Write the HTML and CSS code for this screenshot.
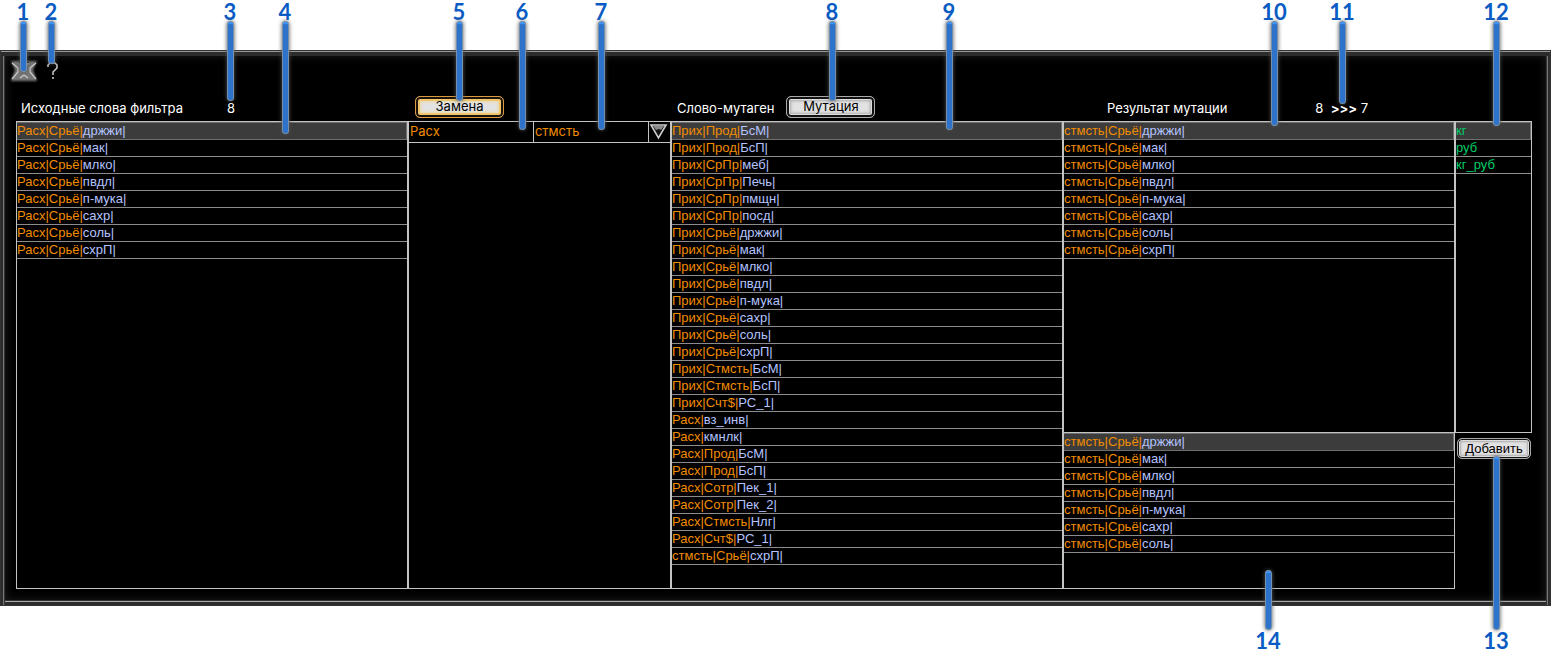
FILE: index.html
```
<!DOCTYPE html>
<html lang="ru">
<head>
<meta charset="utf-8">
<title>Мутация слов</title>
<link rel="stylesheet" href="styles.css">
</head>
<body>
<main class="window">
  <div class="toolbar">
    <button class="tool" aria-label="Закрыть">
      <svg width="30" height="24" viewBox="0 0 30 24">
        <defs><filter id="glow" x="-20%" y="-20%" width="140%" height="140%"><feGaussianBlur stdDeviation="1.2"/></filter></defs>
        <path d="M2 2h26l-4 9 4 11H2l4-11z" fill="#777" filter="url(#glow)"/>
        <path d="M10 3h10l-5 7z" fill="#111"/>
        <path d="M4 4h7l4 6 4-6h7l-5 7 5 9h-7l-4-3-4 3H4l5-9z" fill="#777"/>
        <path d="M3 4l6 5v4l-6 7M27 4l-6 5v4l6 7M11 19l4-3 4 3M11 4l4 6 4-6" fill="none" stroke="#ccc" stroke-width="1.2"/>
      </svg>
    </button>
    <button class="tool help" aria-label="Справка">
      <svg width="12" height="20" viewBox="0 0 12 20">
        <path d="M1 6V4l2-2h5l2 2v3L6 11v3M6 16v2" fill="none" stroke="#ccc" stroke-width="1.5"/>
      </svg>
    </button>
  </div>

  <div class="grid heads">
    <div class="head source-head"><h2>Исходные слова фильтра</h2><output>8</output></div>
    <div class="head replace-head"><button class="btn gold">Замена</button></div>
    <div class="head mutagen-head"><h2>Слово-мутаген</h2><button class="btn">Мутация</button></div>
    <div class="head result-head"><h2>Результат мутации</h2><output>8 &nbsp;<b>&gt;&gt;&gt;</b> 7</output></div>
  </div>

  <div class="grid body">
    <ul class="panel list">
      <li class="on">Расх|Срьё|<span>држжи|</span></li>
      <li>Расх|Срьё|<span>мак|</span></li>
      <li>Расх|Срьё|<span>млко|</span></li>
      <li>Расх|Срьё|<span>пвдл|</span></li>
      <li>Расх|Срьё|<span>п-мука|</span></li>
      <li>Расх|Срьё|<span>сахр|</span></li>
      <li>Расх|Срьё|<span>соль|</span></li>
      <li>Расх|Срьё|<span>схрП|</span></li>
    </ul>
    <section class="panel">
      <div class="replace">
        <input class="from" aria-label="Что заменить" value="Расх">
        <input class="to" aria-label="На что заменить" value="стмсть">
        <button class="drop" aria-label="Открыть список">
          <svg width="20" height="20" viewBox="0 0 20 20"><path d="M2 3h15L9.500 16z" fill="#111" stroke="#ccc" stroke-width="1.6"/><path d="M4 4h11l-3 4-2-1-3 1z" fill="#888"/></svg>
        </button>
      </div>
    </section>
    <ul class="panel list">
      <li class="on">Прих|Прод|<span>БсМ|</span></li>
      <li>Прих|Прод|<span>БсП|</span></li>
      <li>Прих|СрПр|<span>меб|</span></li>
      <li>Прих|СрПр|<span>Печь|</span></li>
      <li>Прих|СрПр|<span>пмщн|</span></li>
      <li>Прих|СрПр|<span>посд|</span></li>
      <li>Прих|Срьё|<span>држжи|</span></li>
      <li>Прих|Срьё|<span>мак|</span></li>
      <li>Прих|Срьё|<span>млко|</span></li>
      <li>Прих|Срьё|<span>пвдл|</span></li>
      <li>Прих|Срьё|<span>п-мука|</span></li>
      <li>Прих|Срьё|<span>сахр|</span></li>
      <li>Прих|Срьё|<span>соль|</span></li>
      <li>Прих|Срьё|<span>схрП|</span></li>
      <li>Прих|Стмсть|<span>БсМ|</span></li>
      <li>Прих|Стмсть|<span>БсП|</span></li>
      <li>Прих|Счт$|<span>РС_1|</span></li>
      <li>Расх|<span>вз_инв|</span></li>
      <li>Расх|<span>кмнлк|</span></li>
      <li>Расх|Прод|<span>БсМ|</span></li>
      <li>Расх|Прод|<span>БсП|</span></li>
      <li>Расх|Сотр|<span>Пек_1|</span></li>
      <li>Расх|Сотр|<span>Пек_2|</span></li>
      <li>Расх|Стмсть|<span>Нлг|</span></li>
      <li>Расх|Счт$|<span>РС_1|</span></li>
      <li>стмсть|Срьё|<span>схрП|</span></li>
    </ul>
    <div class="stack">
      <ul class="panel list upper">
        <li class="on">стмсть|Срьё|<span>држжи|</span></li>
        <li>стмсть|Срьё|<span>мак|</span></li>
        <li>стмсть|Срьё|<span>млко|</span></li>
        <li>стмсть|Срьё|<span>пвдл|</span></li>
        <li>стмсть|Срьё|<span>п-мука|</span></li>
        <li>стмсть|Срьё|<span>сахр|</span></li>
        <li>стмсть|Срьё|<span>соль|</span></li>
        <li>стмсть|Срьё|<span>схрП|</span></li>
      </ul>
      <ul class="panel list lower">
        <li class="on">стмсть|Срьё|<span>држжи|</span></li>
        <li>стмсть|Срьё|<span>мак|</span></li>
        <li>стмсть|Срьё|<span>млко|</span></li>
        <li>стмсть|Срьё|<span>пвдл|</span></li>
        <li>стмсть|Срьё|<span>п-мука|</span></li>
        <li>стмсть|Срьё|<span>сахр|</span></li>
        <li>стмсть|Срьё|<span>соль|</span></li>
      </ul>
    </div>
    <div class="stack">
      <ul class="panel list units upper">
        <li class="on">кг</li>
        <li>руб</li>
        <li>кг_руб</li>
      </ul>
      <div class="add"><button class="btn small">Добавить</button></div>
    </div>
  </div>
</main>

<div class="pins">
  <div class="pin p1"><b>1</b><i></i></div>
  <div class="pin p2"><b>2</b><i></i></div>
  <div class="pin p3"><b>3</b><i></i></div>
  <div class="pin p4"><b>4</b><i></i></div>
  <div class="pin p5"><b>5</b><i></i></div>
  <div class="pin p6"><b>6</b><i></i></div>
  <div class="pin p7"><b>7</b><i></i></div>
  <div class="pin p8"><b>8</b><i></i></div>
  <div class="pin p9"><b>9</b><i></i></div>
  <div class="pin p10"><b>10</b><i></i></div>
  <div class="pin p11"><b>11</b><i></i></div>
  <div class="pin p12"><b>12</b><i></i></div>
  <div class="pin p13"><i></i><b>13</b></div>
  <div class="pin p14"><i></i><b>14</b></div>
</div>
</body>
</html>
```
FILE: styles.css
```
* { box-sizing: border-box; }
body {
  margin: 0;
  padding-top: 50px;
  min-height: 100vh;
  background: #fff;
  font-family: "Liberation Sans", Arial, sans-serif;
  font-size: 13px;
  position: relative;
}
h2, ul { margin: 0; padding: 0; }
button, input { font: inherit; padding: 0; margin: 0; }

.window {
  background: #000;
  border: 1px solid #333;
  padding: 8px 18px 16px 15px;
  box-shadow: inset 0 1px #999, inset 0 5px #2c2c2c, inset 2px 0 #2c2c2c,
    inset 3px 0 #777, inset 4px 0 #333, inset -2px 0 #2c2c2c, inset -3px 0 #777,
    inset -4px 0 #333, inset 0 -3px #2c2c2c, inset 0 -4px #aaa, inset 0 -5px #333,
    inset 0 0 10px 5px #1c1c1c;
}
.toolbar { display: flex; align-items: center; height: 24px; margin-left: -7px; }
.tool { display: flex; background: none; border: 0; }
.help { margin-left: 8px; }

.grid {
  display: grid;
  grid-template-columns: minmax(0, 392fr) minmax(0, 263fr) minmax(0, 392fr) minmax(0, 392fr) minmax(0, 77fr);
}
.heads { height: 38px; padding-top: 12px; }
.head {
  display: flex;
  align-items: center;
  height: 24px;
  color: #fff;
  font-family: Inter, sans-serif;
}
.head h2 { font-size: 13px; font-weight: 400; white-space: nowrap; }
.head h2, .head output { padding-top: 2px; }
.source-head { padding-left: 5px; }
.source-head output { margin-left: 44px; }
.replace-head { padding-left: 7px; }
.mutagen-head { padding-left: 6px; }
.mutagen-head .btn { margin-left: 12px; }
.result-head { padding-left: 44px; }
.result-head output { margin-left: 88px; }

.btn {
  width: 89px;
  height: 22px;
  color: #000;
  background: #e2e2e2;
  border: 1px solid #aaa;
  border-radius: 5px;
  box-shadow: inset 0 0 0 2px #111, inset 0 0 0 3px #ddd, inset 0 0 3px 4px #aaa;
  font-family: Inter, sans-serif;
}
.head .btn { padding-bottom: 2px; }
.gold {
  border-color: #d99a42;
  box-shadow: inset 0 0 0 2px #1a1208, inset 0 0 0 4px #efc56d, inset 0 0 3px 5px #ecd9a8;
}
.small {
  width: 74px;
  height: 21px;
  padding-bottom: 1px;
  font-family: "Liberation Sans", Arial, sans-serif;
  box-shadow: inset 0 0 0 1px #111, inset 0 0 0 2px #ddd, inset 0 0 2px 3px #aaa;
}

.panel { border: 1px solid #c4c4c4; }
.body { min-height: 468px; }
.list { list-style: none; color: #f28c00; line-height: 16px; }
.list li { height: 17px; border-bottom: 1px solid #8c8c8c; white-space: nowrap; }
.list li.on { height: 18px; background: #3c3c3c; border: 1px solid #6e6e6e; border-left: 0; }
.list span { color: #b4c4ff; }
.list.units { color: #0c6; }
.stack { display: flex; flex-direction: column; }
.upper { flex: 2 0 312px; }
.lower { flex: 1 0 156px; border-top: 0; }
.add { flex: 1 0 156px; padding: 5px 0 0 2px; }

.replace { display: flex; height: 21px; border-bottom: 1px solid #c4c4c4; }
.replace input {
  min-width: 0;
  color: #f28c00;
  background: #000;
  border: 0;
  border-right: 1px solid #c4c4c4;
  padding: 0 1px 2px;
  font-family: Inter, sans-serif;
}
.replace .from { flex: 125 1 0; }
.replace .to { flex: 115 1 0; }
.drop { display: flex; width: 21px; background: #000; border: 0; }

.pins { pointer-events: none; }
.pin {
  position: absolute;
  top: 0;
  display: flex;
  flex-direction: column;
  align-items: center;
  width: 30px;
}
.pin b {
  height: 22px;
  color: #0a5cc4;
  font: 700 22px/24px Lato, sans-serif;
}
.pin i {
  width: 5px;
  background: #2d73cb;
  border-top: 2px solid #3c94ff;
  border-radius: 3px;
  box-shadow: 0 0 0 1px #7590ac, 0 0 4px 1px #555;
}
.p1 { left: 8px; }
.p2 { left: 36px; }
.p3 { left: 215px; }
.p4 { left: 270px; }
.p5 { left: 444px; }
.p6 { left: 507px; }
.p7 { left: 586px; }
.p8 { left: 817px; }
.p9 { left: 934px; }
.p10 { left: 1259px; }
.p11 { left: 1327px; }
.p12 { left: 1481px; }
.p13 { left: 1481px; top: 457px; }
.p14 { left: 1253px; top: 571px; }
.p1 i { height: 49px; }
.p2 i { height: 41px; }
.p3 i, .p5 i, .p8 i { height: 78px; }
.p4 i { height: 111px; }
.p6 i, .p7 i, .p9 i { height: 107px; }
.p10 i, .p12 i { height: 103px; }
.p11 i { height: 81px; }
.p13 i { height: 172px; }
.p14 i { height: 58px; }
```
